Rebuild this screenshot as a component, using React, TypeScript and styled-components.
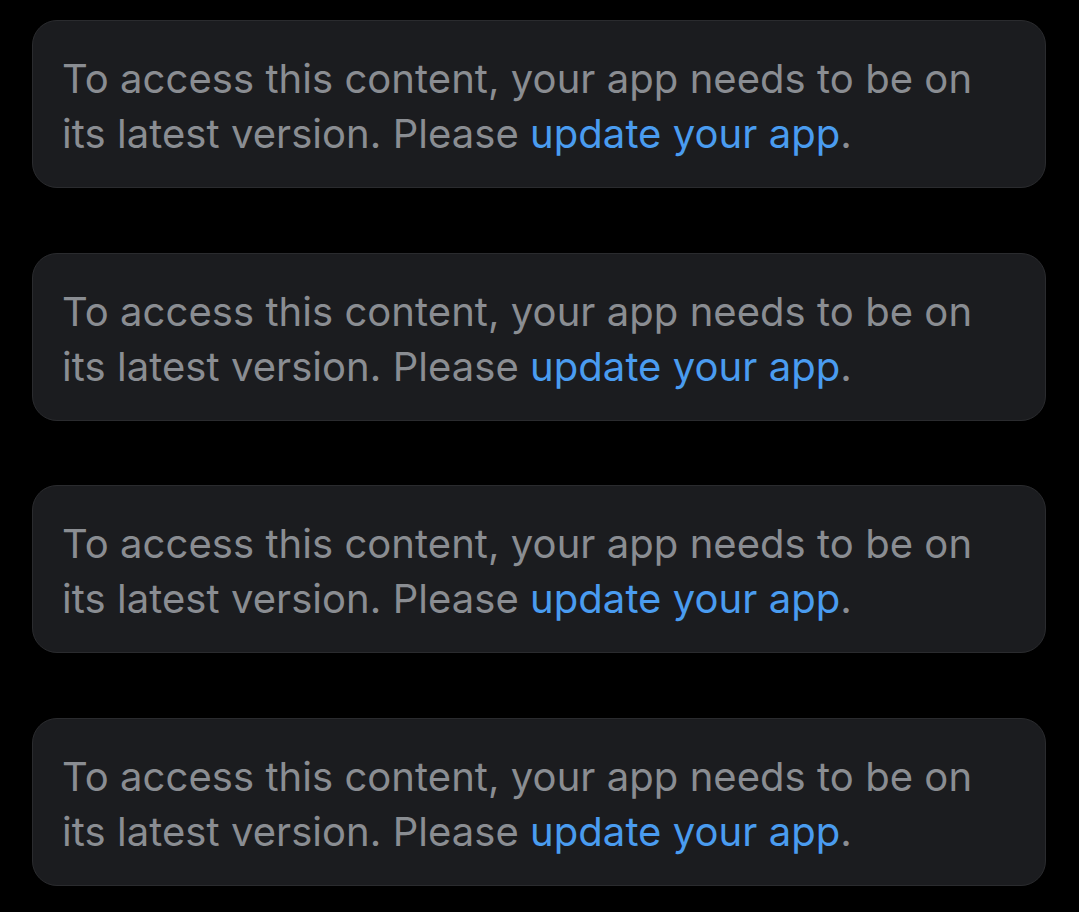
import React from "react";
import styled, { createGlobalStyle } from "styled-components";

const Global = createGlobalStyle`
  html, body { margin: 0; padding: 0; background: #000; }
  body { font-family: Inter, "Noto Sans", sans-serif; }
`;

const Page = styled.div`
  display: flex;
  flex-direction: column;
  gap: 64.67px;
  padding: 20px 33px 20px 32px;
  background: #000;
  min-height: 912px;
  box-sizing: border-box;
`;

const Card = styled.div`
  box-sizing: border-box;
  height: 168px;
  background: #1b1c1f;
  border: 1px solid #2a2b2e;
  border-radius: 25px;
  padding: 30px 29px 0;
`;

const Message = styled.p`
  margin: 0;
  font-family: Inter, "Noto Sans", sans-serif;
  font-size: 40px;
  line-height: 55px;
  color: #8a8d92;
  letter-spacing: 0.05px;
`;

const Link = styled.a`
  color: #4a9cf0;
  text-decoration: none;
`;

export default function App() {
  return (
    <>
      <Global />
      <Page>
        {[0, 1, 2, 3].map((i) => (
          <Card key={i}>
            <Message>
              To access this content, your app needs to be on
              <br />
              its latest version. Please <Link href="#">update your app</Link>.
            </Message>
          </Card>
        ))}
      </Page>
    </>
  );
}
